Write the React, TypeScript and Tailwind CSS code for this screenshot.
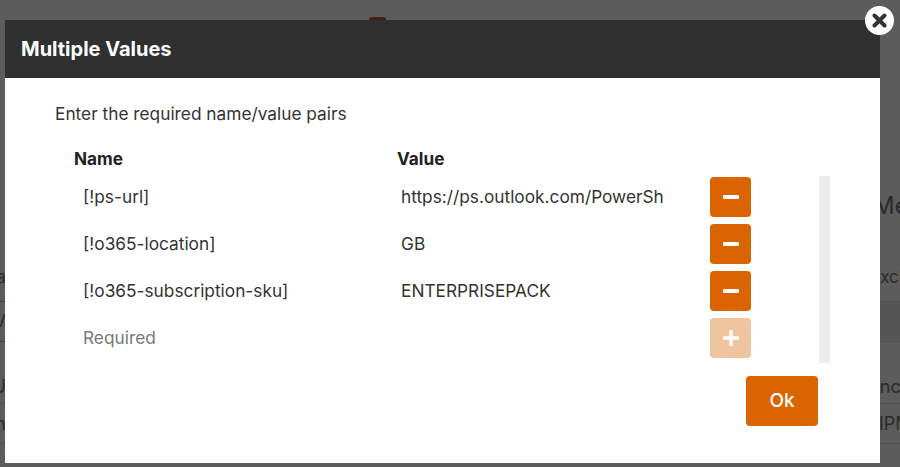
import React from 'react';

const rows = [
    { name: '[!ps-url]', value: 'https://ps.outlook.com/PowerShell-LiveID?PSVersion=4.0' },
    { name: '[!o365-location]', value: 'GB' },
    { name: '[!o365-subscription-sku]', value: 'ENTERPRISEPACK' },
];

const MinusIcon: React.FC = () => (
    <span className="block w-[16px] h-[4px] rounded-[1px] bg-white" />
);

const PlusIcon: React.FC = () => (
    <svg width="16" height="16" viewBox="0 0 16 16">
        <path d="M8 1.5v13M1.5 8h13" stroke="white" strokeWidth="3.6" strokeLinecap="round" />
    </svg>
);

// faint page that sits under the dialog overlay
const BackgroundPage: React.FC = () => (
    <div className="w-full h-[467px] bg-white text-[#777] flex flex-col">
        <div className="h-[20px] flex">
            <div className="ml-[369px] mt-[17px] w-[17px] h-[3px] bg-[#c0602a] rounded-t" />
        </div>
        <div className="h-[168px]" />
        <div className="h-[36px] flex justify-end items-center">
            <div className="w-[27px] overflow-hidden whitespace-nowrap text-[24px]">Messages</div>
        </div>
        <div className="h-[40px]" />
        <div className="h-[28px] flex justify-between items-center text-[17px]">
            <div className="w-[6px] overflow-hidden whitespace-nowrap flex justify-end">Data</div>
            <div className="w-[30px] overflow-hidden whitespace-nowrap">Exclude</div>
        </div>
        <div className="h-[9px]" />
        <div className="h-[41px] flex justify-between">
            <div className="w-[6px] overflow-hidden border-y border-[#f0a060] flex justify-end items-center whitespace-nowrap text-[17px]">V</div>
            <div className="w-[22px] bg-[#eee] border-y border-[#ddd]" />
        </div>
        <div className="h-[22px]" />
        <div className="h-[40px] flex justify-between items-center border-b border-[#ddd] text-[18px] pt-[5px]">
            <div className="w-[6px] overflow-hidden whitespace-nowrap flex justify-end">U</div>
            <div className="w-[25px] overflow-hidden whitespace-nowrap">Include</div>
        </div>
        <div className="h-[40px] flex justify-between items-center border-b border-[#ddd] text-[18px]">
            <div className="w-[6px] overflow-hidden whitespace-nowrap flex justify-end">In</div>
            <div className="w-[21px] overflow-hidden whitespace-nowrap">IPM</div>
        </div>
    </div>
);

const App: React.FC = () => {
    return (
        <div className="relative w-full h-[467px] overflow-hidden" style={{ fontFamily: 'Inter, "Noto Sans", sans-serif' }}>
            <BackgroundPage />
            <div className="absolute inset-0 bg-black/[0.64]" />

            {/* Dialog */}
            <div className="absolute left-[5px] top-[20px] w-[875px] h-[443px] bg-white flex flex-col">
                <div className="h-[58px] bg-[#303030] flex items-center px-[16px] shrink-0">
                    <h1 className="text-[20px] font-bold text-white">Multiple Values</h1>
                </div>

                <div className="flex flex-col pl-[50px] pr-[50px] pt-[24px]">
                    <p className="text-[17.3px] leading-[24px] text-[#333]">Enter the required name/value pairs</p>

                    <div className="flex mt-[21px] pl-[19px] text-[17.2px] leading-[24px] font-bold text-[#222]">
                        <div className="w-[323px]">Name</div>
                        <div>Value</div>
                    </div>

                    <div className="flex mt-[5px] pl-[19px] h-[187px]">
                        <div className="flex-1 flex flex-col gap-[7px] pt-[1px]">
                            {rows.map(row => (
                                <div key={row.name} className="flex items-center h-[40px]">
                                    <div className="w-[323px]">
                                        <input
                                            defaultValue={row.name}
                                            className="w-[300px] pl-[9px] text-[17.3px] text-[#333] outline-none bg-transparent"
                                        />
                                    </div>
                                    <div className="w-[313px]">
                                        <input
                                            defaultValue={row.value}
                                            className="w-[266px] pl-[4px] text-[17.3px] text-[#333] outline-none bg-transparent"
                                        />
                                    </div>
                                    <button className="w-[41px] h-[40px] rounded-[4px] bg-[#d96400] flex items-center justify-center">
                                        <MinusIcon />
                                    </button>
                                </div>
                            ))}
                            <div className="flex items-center h-[40px]">
                                <div className="w-[323px]">
                                    <input
                                        placeholder="Required"
                                        className="w-[300px] pl-[9px] text-[17.3px] text-[#333] placeholder:text-[#777] outline-none bg-transparent"
                                    />
                                </div>
                                <div className="w-[313px]" />
                                <button className="w-[41px] h-[40px] rounded-[4px] bg-[#f0c49e] flex items-center justify-center">
                                    <PlusIcon />
                                </button>
                            </div>
                        </div>
                        <div className="w-[11px] bg-[#ededed]" />
                    </div>

                    <div className="flex justify-end mt-[13px] pr-[12px]">
                        <button className="w-[72px] h-[50px] rounded-[4px] bg-[#d96400] text-white text-[19px] font-medium">
                            Ok
                        </button>
                    </div>
                </div>
            </div>

            {/* close */}
            <button className="absolute left-[865px] top-[6px] w-[29px] h-[29px] rounded-full bg-white flex items-center justify-center">
                <svg width="15" height="15" viewBox="0 0 15 15">
                    <path d="M2.5 2.5l10 10M12.5 2.5l-10 10" stroke="#333" strokeWidth="4" strokeLinecap="round" />
                </svg>
            </button>
        </div>
    );
};

export default App;
